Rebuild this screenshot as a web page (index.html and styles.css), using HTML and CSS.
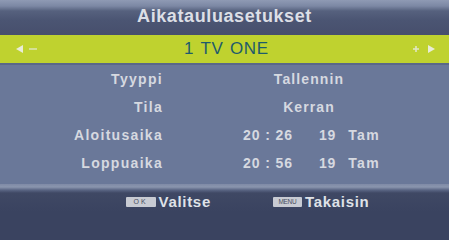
FILE: index.html
```html
<!DOCTYPE html>
<html lang="fi">
<head>
<meta charset="utf-8">
<title>Aikatauluasetukset</title>
<link rel="stylesheet" href="styles.css">
</head>
<body>
<div class="screen">
  <div class="header"><span class="title">Aikatauluasetukset</span></div>
  <div class="channel-bar">
    <span class="nav nav-left">
      <svg width="24" height="10" viewBox="0 0 24 10"><polygon points="0,5 7,1 7,9" fill="#e8ecd8"/><rect x="13" y="4.3" width="8" height="1.4" fill="#dfe6c0"/></svg>
    </span>
    <span class="channel">1 TV ONE</span>
    <span class="nav nav-right">
      <svg width="26" height="10" viewBox="0 0 26 10"><rect x="2" y="4.2" width="6" height="1.6" fill="#dfe6c0"/><rect x="4.2" y="2" width="1.6" height="6" fill="#dfe6c0"/><polygon points="24,5 17,1 17,9" fill="#e8ecd8"/></svg>
    </span>
  </div>
  <div class="divider"></div>
  <div class="body">
    <div class="row"><span class="label">Tyyppi</span><span class="value">Tallennin</span></div>
    <div class="row"><span class="label">Tila</span><span class="value">Kerran</span></div>
    <div class="row"><span class="label">Aloitusaika</span><span class="value time"><span class="clock">20 : 26</span><span class="day">19</span><span class="wday">Tam</span></span></div>
    <div class="row"><span class="label">Loppuaika</span><span class="value time"><span class="clock">20 : 56</span><span class="day">19</span><span class="wday">Tam</span></span></div>
  </div>
  <div class="footer">
    <span class="hint"><span class="key key-ok">OK</span><span class="hint-text">Valitse</span></span>
    <span class="hint"><span class="key key-menu">MENU</span><span class="hint-text">Takaisin</span></span>
  </div>
</div>
</body>
</html>
```
FILE: styles.css
```css
html, body {
  margin: 0;
  padding: 0;
  background: #3a4360;
}
.screen {
  width: 449px;
  height: 213px;
  display: flex;
  flex-direction: column;
  font-family: "Liberation Sans", Arial, sans-serif;
  background: #6a7899;
  overflow: hidden;
  white-space: nowrap;
}
.header {
  height: 35px;
  flex: none;
  display: flex;
  justify-content: center;
  align-items: center;
  background: linear-gradient(to bottom, #8f9ab4 0px, #7c88a4 6px, #56617e 11px, #4b5573 20px, #474f6c 35px);
}
.title {
  color: #dcdfe6;
  font-weight: bold;
  font-size: 18px;
  letter-spacing: 0.6px;
  margin-top: -3px;
}
.channel-bar {
  height: 28px;
  flex: none;
  background: #bfd22f;
  display: flex;
  align-items: center;
  justify-content: space-between;
  padding: 0 12px 0 16px;
}
.nav {
  display: flex;
  align-items: center;
  width: 26px;
}
.nav-right { justify-content: flex-end; }
.channel {
  color: #1e5b6c;
  font-size: 17px;
  letter-spacing: 0.7px;
  word-spacing: 1px;
}
.divider {
  height: 2px;
  flex: none;
  background: #5a6888;
}
.body {
  flex: none;
  display: flex;
  flex-direction: column;
  height: 119px;
}
.row {
  height: 28px;
  display: grid;
  grid-template-columns: 163px 138px;
  column-gap: 77px;
  align-items: center;
  font-weight: bold;
  font-size: 14px;
  color: #d6d9e0;
  letter-spacing: 1.1px;
}
.label { text-align: right; letter-spacing: 1.3px; }
.value { text-align: center; }
.time {
  display: flex;
  justify-content: flex-start;
  padding-left: 3px;
  letter-spacing: 0.9px;
}
.day { margin-left: 26px; }
.wday { margin-left: 12px; letter-spacing: 1.3px; }
.footer {
  flex: 1;
  display: flex;
  justify-content: center;
  align-items: center;
  gap: 62px;
  padding-top: 6px;
  padding-left: 46px;
  background: linear-gradient(to bottom, #7f8aa6 0px, #8a95ae 3px, #5a6584 6px, #3f4864 9px, #3a4360 28px);
}
.hint {
  display: flex;
  align-items: center;
  gap: 3px;
}
.key {
  display: inline-flex;
  align-items: center;
  justify-content: center;
  height: 10px;
  background: #c8cbd3;
  color: #4a4e60;
  font-size: 7px;
  border-radius: 1px;
}
.key-ok { width: 30px; letter-spacing: 2px; }
.key-menu { width: 29px; font-size: 6.5px; letter-spacing: -0.3px; }
.hint-text {
  color: #dfe2e8;
  font-weight: bold;
  font-size: 15px;
  letter-spacing: 0.7px;
}
```
